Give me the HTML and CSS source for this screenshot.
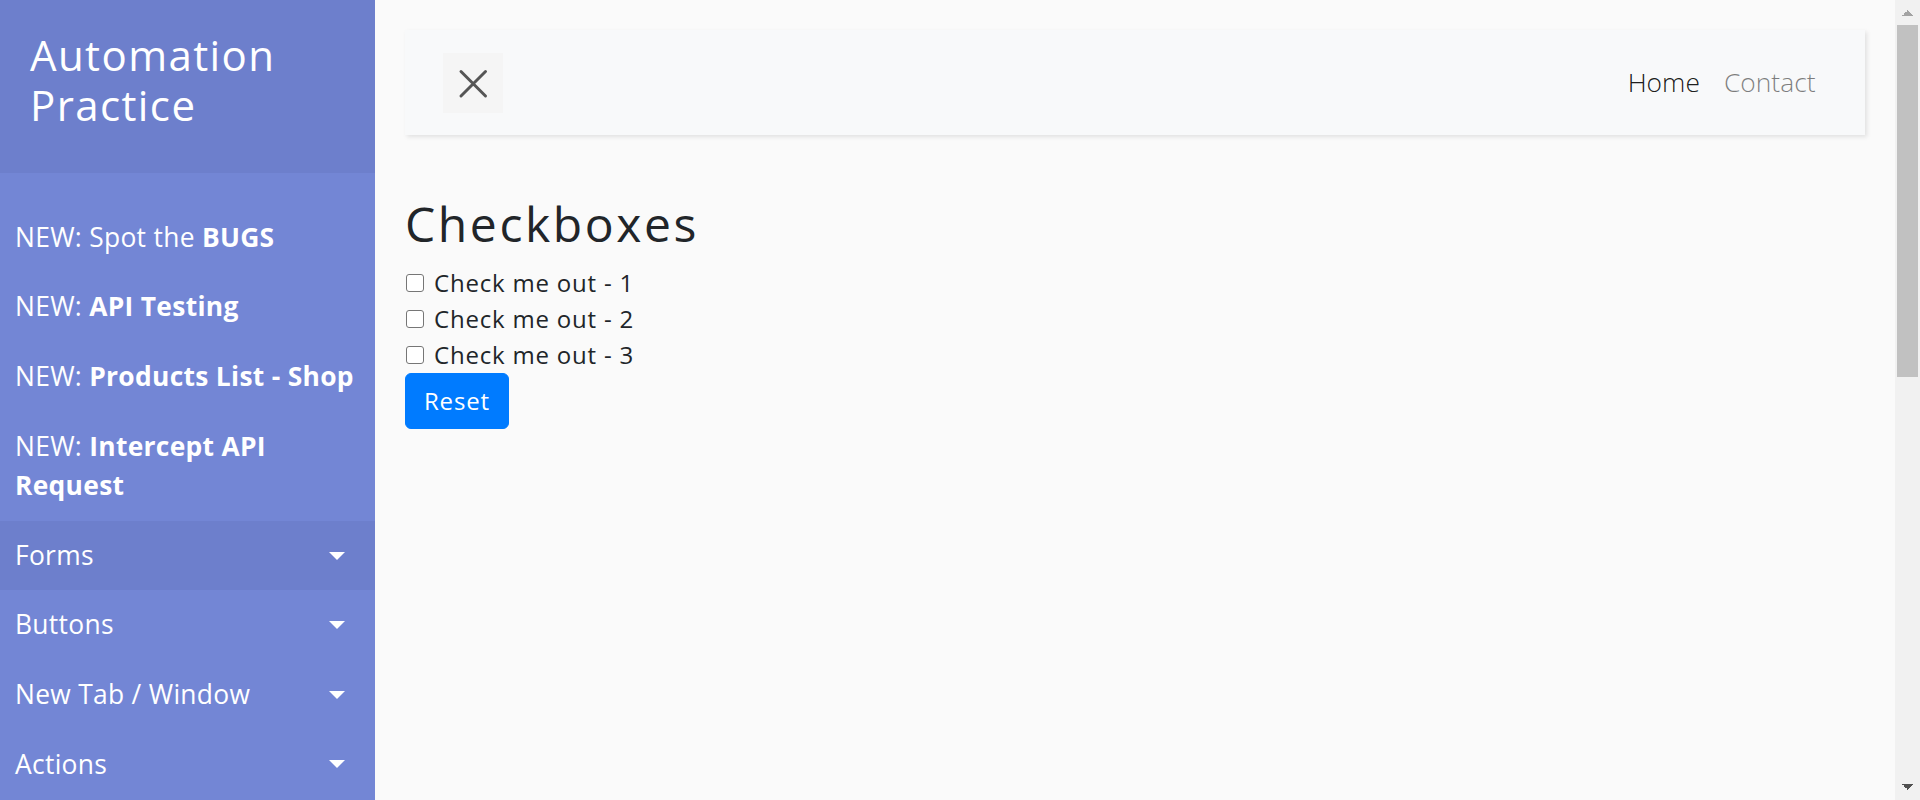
FILE: index.html
```html
<!DOCTYPE html>
<html lang="en">
<head>
<meta charset="utf-8">
<title>Checkboxes | Automation Practice</title>
<link rel="stylesheet" href="styles.css">
</head>
<body>
<div class="wrapper">
  <nav class="sidebar">
    <div class="sidebar-header">
      <h3 class="brand">Automation Practice</h3>
    </div>
    <ul class="components">
      <li><a class="side-link" href="#">NEW: Spot the <strong>BUGS</strong></a></li>
      <li><a class="side-link" href="#">NEW: <strong>API Testing</strong></a></li>
      <li><a class="side-link" href="#">NEW: <strong>Products List - Shop</strong></a></li>
      <li><a class="side-link" href="#">NEW: <strong>Intercept API Request</strong></a></li>
      <li class="active"><a class="side-link dropdown" href="#">Forms</a></li>
      <li><a class="side-link dropdown" href="#">Buttons</a></li>
      <li><a class="side-link dropdown" href="#">New Tab / Window</a></li>
      <li><a class="side-link dropdown" href="#">Actions</a></li>
    </ul>
  </nav>

  <main class="content">
    <header class="topbar">
      <button class="toggle" type="button" aria-label="Close sidebar">
        <svg class="toggle-icon" width="60" height="60" viewBox="0 0 60 60" aria-hidden="true">
          <path d="M18 18.5 L42.5 43 M42.5 18.5 L18 43" stroke="#555" stroke-width="3" stroke-linecap="round" fill="none"/>
        </svg>
      </button>
      <ul class="nav-links">
        <li><a class="nav-link nav-link-active" href="#">Home</a></li>
        <li><a class="nav-link" href="#">Contact</a></li>
      </ul>
    </header>

    <h2 class="page-title">Checkboxes</h2>
    <div class="check-list">
      <label class="check-row"><input class="check" type="checkbox"><span>Check me out - 1</span></label>
      <label class="check-row"><input class="check" type="checkbox"><span>Check me out - 2</span></label>
      <label class="check-row"><input class="check" type="checkbox"><span>Check me out - 3</span></label>
    </div>
    <button class="btn-primary" type="button">Reset</button>
  </main>

  <div class="scrollbar" aria-hidden="true">
    <div class="sb-btn sb-up"></div>
    <div class="sb-thumb"></div>
    <div class="sb-track"></div>
    <div class="sb-btn sb-down"></div>
  </div>
</div>
</body>
</html>
```

FILE: styles.css
```css
* {
  box-sizing: border-box;
}

html,
body {
  height: 100%;
}

body {
  margin: 0;
  overflow: hidden;
  font-family: "Open Sans", "Liberation Sans", sans-serif;
  font-size: 24px;
  line-height: 1.5;
  color: #212529;
  background: #fafafa;
}

.wrapper {
  display: flex;
  align-items: stretch;
  height: 100%;
}

/* ---------- Sidebar ---------- */
.sidebar {
  width: 375px;
  flex-shrink: 0;
  background: #7386d5;
  color: #fff;
  overflow: hidden;
}

.sidebar-header {
  padding: 30px;
  background: #6d7fcc;
}

.brand {
  margin: 0 0 12px;
  font-size: 42px;
  font-weight: 500;
  line-height: 1.2;
  letter-spacing: 1.4px;
}

.components {
  list-style: none;
  margin: 0;
  padding: 30px 0;
}

.components li.active {
  background: #6d7fcc;
}

.side-link {
  position: relative;
  display: block;
  padding: 15px;
  font-size: 26.4px;
  line-height: 1.5;
  letter-spacing: 0.3px;
  color: #fff;
  text-decoration: none;
}

.side-link strong {
  font-weight: 700;
}

.dropdown::after {
  content: "";
  position: absolute;
  top: 50%;
  right: 30px;
  transform: translateY(-50%);
  border-top: 8px solid #fff;
  border-left: 8px solid transparent;
  border-right: 8px solid transparent;
}

/* ---------- Content ---------- */
.content {
  flex: 1;
  min-width: 0;
  padding: 30px;
}

.topbar {
  display: flex;
  align-items: center;
  justify-content: space-between;
  padding: 22.5px 37.5px;
  margin-bottom: 60px;
  background: #f8f9fa;
  box-shadow: 1.5px 1.5px 4.5px rgba(0, 0, 0, 0.1);
}

.toggle {
  width: 60px;
  height: 60px;
  padding: 0;
  border: 0;
  background: #f5f5f5;
  display: flex;
  align-items: center;
  justify-content: center;
}

.toggle-icon {
  display: block;
}

.nav-links {
  display: flex;
  list-style: none;
  margin: 0;
  padding: 0;
}

.nav-link {
  display: block;
  padding: 0 12px;
  font-size: 26.4px;
  line-height: 1.5;
  font-weight: 300;
  color: rgba(0, 0, 0, 0.5);
  text-decoration: none;
}

.nav-link-active {
  color: rgba(0, 0, 0, 0.9);
}

.page-title {
  margin: 0 0 12px;
  font-size: 48px;
  font-weight: 500;
  line-height: 1.2;
  letter-spacing: 2.6px;
}

.check-list {
  display: flex;
  flex-direction: column;
}

.check-row {
  display: flex;
  align-items: center;
  line-height: 36px;
  letter-spacing: 0.8px;
}

.check {
  appearance: none;
  -webkit-appearance: none;
  width: 18px;
  height: 18px;
  margin: 0 10px 0 1px;
  border: 1.5px solid #767676;
  border-radius: 3px;
  background: #fff;
}

.btn-primary {
  display: block;
  padding: 9px 18px;
  border: 1px solid #007bff;
  border-radius: 6px;
  background: #007bff;
  color: #fff;
  font-family: inherit;
  font-size: 24px;
  line-height: 36px;
  letter-spacing: 0.8px;
}

/* ---------- Scrollbar ---------- */
.scrollbar {
  width: 25px;
  flex-shrink: 0;
  display: flex;
  flex-direction: column;
  background: #f1f1f1;
}

.sb-btn {
  height: 25px;
  flex-shrink: 0;
}

.sb-up {
  background:
    linear-gradient(to bottom right, transparent 50%, #a3a3a3 50%) 6.5px 10px / 6px 6px no-repeat,
    linear-gradient(to bottom left, transparent 50%, #a3a3a3 50%) 12.5px 10px / 6px 6px no-repeat;
}

.sb-down {
  background:
    linear-gradient(to top right, transparent 50%, #505050 50%) 6.5px 9px / 6px 6px no-repeat,
    linear-gradient(to top left, transparent 50%, #505050 50%) 12.5px 9px / 6px 6px no-repeat;
}

.sb-thumb {
  height: 352px;
  margin: 0 2px;
  background: #c1c1c1;
}

.sb-track {
  flex: 1;
}
```
